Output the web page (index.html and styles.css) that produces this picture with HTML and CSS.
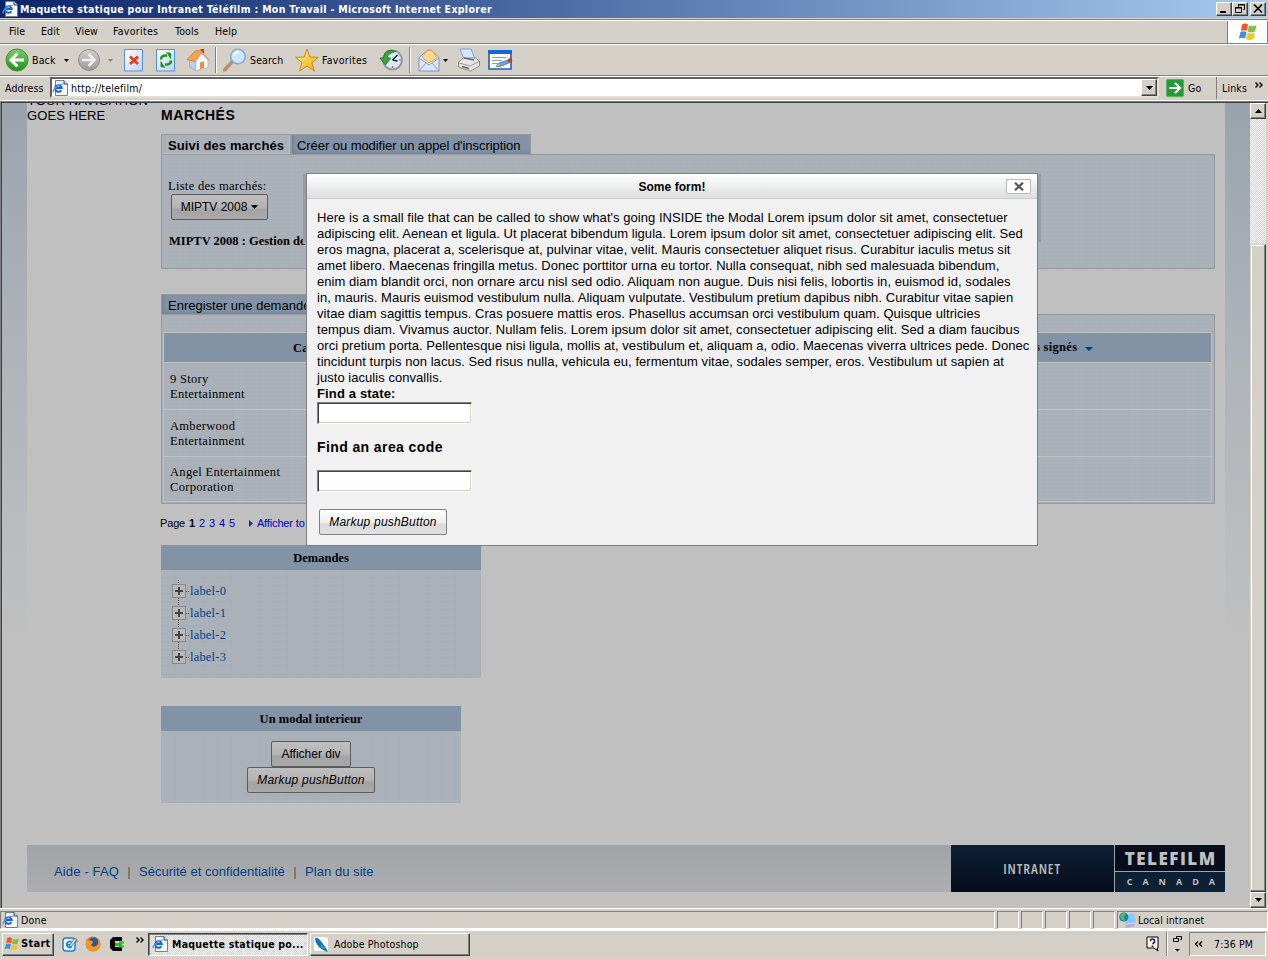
FILE: index.html
```html
<!DOCTYPE html>
<html lang="fr">
<head>
<meta charset="utf-8">
<title>Maquette statique pour Intranet Téléfilm : Mon Travail</title>
<link rel="stylesheet" href="styles.css">
</head>
<body>
<svg class="defs" width="0" height="0">
  <defs>
    <linearGradient id="gold" x1="0" y1="0" x2="1" y2="1"><stop offset="0" stop-color="#fff59a"/><stop offset="1" stop-color="#f0a800"/></linearGradient>
    <linearGradient id="green" x1="0" y1="0" x2="0" y2="1"><stop offset="0" stop-color="#7fcf6a"/><stop offset="1" stop-color="#1f8f1c"/></linearGradient>
    <linearGradient id="silver" x1="0" y1="0" x2="0" y2="1"><stop offset="0" stop-color="#d0d0d0"/><stop offset="1" stop-color="#9a9a9a"/></linearGradient>
    <linearGradient id="paper" x1="0" y1="0" x2="1" y2="1"><stop offset="0" stop-color="#fff"/><stop offset="1" stop-color="#b9d3f5"/></linearGradient>
  </defs>
  <symbol id="ie" viewBox="0 0 16 16">
    <path d="M3.500.5h8.500l3.500 3.500v11.500h-12z" fill="#f6f8fc" stroke="#6b7f9e"/>
    <path d="M12 .5V4h3.500" fill="#cfd9e8" stroke="#33415e"/>
    <path d="M9.300 10.200A3.300 3.300 0 1 1 9.700 8H3.800" fill="none" stroke="#1d62d0" stroke-width="2"/>
    <path d="M1 12.500C.5 10 6 4 11 4" fill="none" stroke="#4f97ee" stroke-width="1.200"/>
  </symbol>
  <symbol id="flag" viewBox="0 0 20 18">
    <path d="M4 1.500Q7-.5 10 1.500L8.700 8Q6 6.500 2.800 8z" fill="#f0582a"/>
    <path d="M11 2.300Q14 4.200 18.500 2.300L17 8.600Q13 10.300 9.700 8.500z" fill="#7cc242"/>
    <path d="M2.500 9Q5.500 7.500 8.500 9.200L7.200 15.500Q4 13.800.8 15.500z" fill="#3f8ee0"/>
    <path d="M9.500 9.700Q13 11.300 16.800 9.800L15.500 16Q11.500 17.800 8.200 16z" fill="#fbc41c"/>
  </symbol>
</svg>

<header class="titlebar">
  <svg width="16" height="16"><use href="#ie"/></svg>
  <h1 class="window-title">Maquette statique pour Intranet Téléfilm : Mon Travail - Microsoft Internet Explorer</h1>
  <div class="window-buttons">
    <span class="wbtn"><svg width="12" height="11"><path d="M2 8h6v2H2z"/></svg></span>
    <span class="wbtn"><svg width="12" height="11" fill="none" stroke="#000"><path d="M4.500 4V1.500h6v5H9M4 2h7M1.500 4.500h6v5h-6zM1 5h7"/></svg></span>
    <span class="wbtn last"><svg width="12" height="11"><path d="M2 1.500l8 8M10 1.500l-8 8" stroke="#000" stroke-width="1.700"/></svg></span>
  </div>
</header>

<nav class="menubar">
  <span class="m-file">File</span><span class="m-edit">Edit</span><span class="m-view">View</span><span class="m-fav">Favorites</span><span class="m-tools">Tools</span><span class="m-help">Help</span>
  <div class="throbber"><svg width="20" height="18"><use href="#flag"/></svg></div>
</nav>

<div class="toolbar">
  <svg class="t-back" width="24" height="24"><circle cx="12" cy="12" r="11" fill="url(#green)" stroke="#3f8f3a"/><path d="M12.500 5.500L6 12l6.500 6.500M6.500 12H19" fill="none" stroke="#fff" stroke-width="3"/></svg>
  <span class="t-backlabel">Back</span>
  <svg class="t-caret" width="5" height="3"><path d="M0 0h5L2.500 3z"/></svg>
  <svg class="t-fwd" width="24" height="24"><circle cx="12" cy="12" r="10.500" fill="url(#silver)" stroke="#8f8f8f"/><path d="M11.500 6L17.500 12l-6 6M17 12H5" fill="none" stroke="#eee" stroke-width="2.600"/></svg>
  <svg class="t-caret2" width="5" height="3"><path d="M0 0h5L2.500 3z" fill="#808080"/></svg>
  <svg class="t-stop" width="20" height="24"><path d="M.5 1.500h18v21.500H.5z" fill="url(#paper)" stroke="#5a8fd8"/><path d="M6 8.500l8 7.500M14 8.500L6 16" stroke="#f03a10" stroke-width="2.800"/></svg>
  <svg class="t-refresh" width="20" height="24"><path d="M.5 1.500h18v21.500H.5z" fill="url(#paper)" stroke="#5a8fd8"/><path d="M5 11.500q0-4.500 6-4" fill="none" stroke="#16961a" stroke-width="2.600"/><path d="M10 4l5 1v6.500zM9.500 20l-5-1v-6.500z" fill="#16961a"/><path d="M15 12.500q0 4.500-6 4" fill="none" stroke="#16961a" stroke-width="2.600"/></svg>
  <svg class="t-home" width="24" height="24"><path d="M14.500 1h3.500v6h-3.500z" fill="#c83a18"/><path d="M3.500 12l6 1.500v9l-6-3.500z" fill="#b7cdf2" stroke="#8ea5cc" stroke-width=".7"/><path d="M9.500 13l6-8 6.500 7v7.500l-12.500 3z" fill="#f2f6fe" stroke="#9db3da" stroke-width=".7"/><path d="M1 11.500L9.500 2.500l6.500.5-7 10.500z" fill="#f9a24c" stroke="#dd7b24" stroke-width=".8"/><path d="M9 13.500l6.500-9.500 8 8.500" fill="none" stroke="#e8a070" stroke-width="1.200"/><path d="M14 14.500l4-1v6.500l-4 1z" fill="#e4903a"/></svg>
  <i class="sep s1"></i>
  <svg class="t-search" width="24" height="24"><path d="M1.500 22L9 14" stroke="#c5896a" stroke-width="3.500" stroke-linecap="round"/><circle cx="15" cy="8.500" r="7.300" fill="#c9e8fd" stroke="#8aa9d6" stroke-width="1.600"/><path d="M10.500 8q1-4 5-4.300" fill="none" stroke="#fff" stroke-width="2"/></svg>
  <span class="t-searchlabel">Search</span>
  <svg class="t-star" width="24" height="24"><path d="M12 1l2.800 8 8.500.3-6.500 5.500 2.600 8.200L12 18l-7.300 5 2.300-8.300L.7 9.300 9.200 9z" fill="url(#gold)" stroke="#c88b10"/></svg>
  <span class="t-favlabel">Favorites</span>
  <svg class="t-history" width="24" height="24"><circle cx="13.500" cy="12" r="9.500" fill="#d7eaf6" stroke="#8b9cab" stroke-width="2"/><path d="M13.500 12l5-5M13.500 12l5 1" stroke="#223" stroke-width="1.500"/><path d="M17 3.500Q6-1 4.500 10H1l5.500 7 5-7H8Q9 4.500 17 3.500z" fill="#3ba53c" stroke="#23802a"/><path d="M13.500 18v2M20 12h2" stroke="#d44" stroke-width="1.200"/></svg>
  <i class="sep s2"></i>
  <svg class="t-mail" width="22" height="24"><path d="M1 9.500L10 2h3l8 7.500v13.500H1z" fill="#dbe8fb" stroke="#8794c8"/><path d="M4 9l6-6.500h4L19 10l-8 5z" fill="#ffd88a" stroke="#d79f4c" stroke-width=".8"/><path d="M1 10l10 7 10-7M1 23l7-8M21 23l-7-8" fill="none" stroke="#8b9bd0"/></svg>
  <svg class="t-caret3" width="5" height="3"><path d="M0 0h5L2.500 3z"/></svg>
  <svg class="t-print" width="24" height="24"><path d="M3 1h11l4 10H7z" fill="#d5e6fc" stroke="#7ca0dc"/><path d="M1.500 14l5-4h12l4 3v5l-9 5-12-4z" fill="#e6e6e6" stroke="#8c8c8c"/><path d="M2 15l11 3 9-4.500" fill="none" stroke="#999"/><path d="M7 10l10 2" stroke="#666" stroke-width="1.500"/><path d="M5 18.500l7 2" stroke="#666" stroke-width="1.500"/></svg>
  <svg class="t-edit" width="25" height="20"><path d="M1 1h22v18H1z" fill="#fff" stroke="#1b5fc0" stroke-width="1.600"/><path d="M0 0h24v4H0z" fill="#1469d8"/><path d="M4 7.500h14M4 10.500h10M4 13.500h6" stroke="#999"/><path d="M8 16.500l3-3.500 9-3 1 3-9 3.500z" fill="#69a8ee" stroke="#345c9e" stroke-width=".7"/><path d="M8 16.500l3-3.500 1 3z" fill="#f0b050"/><circle cx="22" cy="10.500" r="2.200" fill="#c9391f"/></svg>
</div>

<div class="addressbar">
  <span class="a-label">Address</span>
  <div class="a-field"><svg width="16" height="16"><use href="#ie"/></svg><span class="a-url">http://telefilm/</span><span class="a-drop"><svg width="7" height="4"><path d="M0 0h7L3.500 4z"/></svg></span></div>
  <div class="a-go"><svg width="18" height="18"><rect x=".5" y=".5" width="17" height="17" rx="1" fill="#27973a" stroke="#58b45c"/><path d="M3 9h10M9 4l5 5-5 5" fill="none" stroke="#fff" stroke-width="2.200"/></svg><span>Go</span></div>
  <div class="a-links"><span>Links</span><svg width="8" height="6" fill="none" stroke="#000" stroke-width="1.400"><path d="M.5.5L3 3 .5 5.500M4.500.5L7 3 4.500 5.500"/></svg></div>
</div>

<main class="window">
  <div class="page">
    <div class="strip"></div>
    <div class="site">
      <div class="columns">
        <aside class="sidenav">YOUR NAVIGATION<br>GOES HERE</aside>
        <section class="content">
          <h2 class="heading">MARCHÉS</h2>
          <div class="tabs">
            <span class="tab active">Suivi des marchés</span><span class="tab off">Créer ou modifier un appel d'inscription</span>
          </div>
          <div class="panel markets">
            <div class="m-label">Liste des marchés:</div>
            <span class="btn b-miptv">MIPTV 2008 <svg width="7" height="4"><path d="M0 0h7L3.500 4z"/></svg></span>
            <div class="m-title">MIPTV 2008 : Gestion de</div>
          </div>
          <div class="tabs second"><span class="tab off enr">Enregister une demande</span></div>
          <div class="panel catalog">
            <div class="table">
              <div class="thead"><span class="th1">Ca</span><span class="th2">s signés <svg width="8" height="4"><path d="M0 0h8L4 4z" fill="#003f87"/></svg></span></div>
              <div class="row">9 Story<br>Entertainment</div>
              <div class="row r2">Amberwood<br>Entertainment</div>
              <div class="row r3">Angel Entertainment<br>Corporation</div>
            </div>
          </div>
          <div class="pager"><span>Page</span><b>1</b><a>2</a><a>3</a><a>4</a><a>5</a><svg width="4" height="7"><path d="M0 0l4 3.500L0 7z" fill="#003f87"/></svg><a class="all">Afficher to</a></div>
          <div class="box demandes">
            <h3>Demandes</h3>
            <ul class="tree">
              <li><i class="plus"></i><a>label-0</a></li>
              <li><i class="plus"></i><a>label-1</a></li>
              <li><i class="plus"></i><a>label-2</a></li>
              <li><i class="plus"></i><a>label-3</a></li>
            </ul>
          </div>
          <div class="box interieur">
            <h3>Un modal interieur</h3>
            <div class="stack"><span class="btn b-div">Afficher div</span><span class="btn b-push">Markup pushButton</span></div>
          </div>
        </section>
      </div>
      <footer class="footer">
        <div class="f-links"><a class="f1">Aide - FAQ</a><i>|</i><a class="f2">Sécurité et confidentialité</a><i>|</i><a class="f3">Plan du site</a></div>
        <div class="f-intranet">INTRANET</div>
        <div class="f-logo"><b>TELEFILM</b><span>CANADA</span></div>
      </footer>
    </div>
    <div class="strip"></div>

    <div class="shadow"></div>
    <div class="modal">
      <div class="modal-head"><span class="modal-title">Some form!</span><span class="close"><svg width="10" height="9"><path d="M1 .8l8 7.400M9 .8L1 8.200" stroke="#555" stroke-width="2.200"/></svg></span></div>
      <div class="modal-body">
        <p class="lorem">Here is a small file that can be called to show what's going INSIDE the Modal Lorem ipsum dolor sit amet, consectetuer<br>adipiscing elit. Aenean et ligula. Ut placerat bibendum ligula. Lorem ipsum dolor sit amet, consectetuer adipiscing elit. Sed<br>eros magna, placerat a, scelerisque at, pulvinar vitae, velit. Mauris consectetuer aliquet risus. Curabitur iaculis metus sit<br>amet libero. Maecenas fringilla metus. Donec porttitor urna eu tortor. Nulla consequat, nibh sed malesuada bibendum,<br>enim diam blandit orci, non ornare arcu nisl sed odio. Aliquam non augue. Duis nisi felis, lobortis in, euismod id, sodales<br>in, mauris. Mauris euismod vestibulum nulla. Aliquam vulputate. Vestibulum pretium dapibus nibh. Curabitur vitae sapien<br>vitae diam sagittis tempus. Cras posuere mattis eros. Phasellus accumsan orci vestibulum quam. Quisque ultricies<br>tempus diam. Vivamus auctor. Nullam felis. Lorem ipsum dolor sit amet, consectetuer adipiscing elit. Sed a diam faucibus<br>orci pretium porta. Pellentesque nisi ligula, mollis at, vestibulum et, aliquam a, odio. Maecenas viverra ultrices pede. Donec<br>tincidunt turpis non lacus. Sed risus nulla, vehicula eu, fermentum vitae, sodales semper, eros. Vestibulum ut sapien at<br>justo iaculis convallis.</p>
        <label class="state">Find a state:</label>
        <div class="input"></div>
        <h4 class="area">Find an area code</h4>
        <div class="input"></div>
        <span class="btn light b-push">Markup pushButton</span>
      </div>
    </div>
  </div>
  <div class="scrollbar">
    <span class="sbtn"><svg width="7" height="4"><path d="M0 4h7L3.500 0z"/></svg></span>
    <span class="track"></span>
    <span class="thumb"></span>
    <span class="sbtn"><svg width="7" height="4"><path d="M0 0h7L3.500 4z"/></svg></span>
  </div>
</main>

<div class="status">
  <div class="cell done"><svg width="16" height="16"><use href="#ie"/></svg><span>Done</span></div>
  <div class="cell small"></div><div class="cell small"></div><div class="cell small"></div><div class="cell small"></div><div class="cell small"></div>
  <div class="cell zone"><svg width="17" height="16"><path d="M6 3.500l9-1.500 1.300 7.500-9 1.500z" fill="#6cd4fb" stroke="#b0bdea" stroke-width="1.500"/><circle cx="4.800" cy="5" r="4.600" fill="#1f78d0"/><path d="M2 2q3-3 5 0l-2 3 1 4-3-1-2-3z" fill="#4bc33a"/><path d="M6 13l9-1.500 1 3-9 1.500z" fill="#b0b0e0"/></svg><span>Local intranet</span></div>
</div>

<footer class="taskbar">
  <div class="start"><svg width="16" height="16"><use href="#flag"/></svg><b>Start</b></div>
  <svg class="q1" width="16" height="16"><rect x="1" y="2" width="12" height="13" rx="3" fill="#f0f7ff" stroke="#1f7fd6" stroke-width="1.500"/><path d="M9.500 6A3 3 0 1 0 10 10.500M5 8.500h5" fill="none" stroke="#1f7fd6" stroke-width="1.600"/><path d="M7 10l6-8 2 1.500-6 7.500z" fill="#cbe6ff" stroke="#1a66b8" stroke-width=".8"/><circle cx="14.500" cy="5" r="1.200" fill="#d0602a"/></svg>
  <svg class="q2" width="16" height="16"><circle cx="8" cy="8" r="7.500" fill="#e9731c"/><circle cx="8.500" cy="6.500" r="5" fill="#28599f"/><path d="M1 3q2 2 4 1.500 3 0 3 2L6 9q2 3 6 .5 2-2 1-6 3.500 3 2 8-3 4-7 4T1 11z" fill="#f29522"/></svg>
  <svg class="q3" width="16" height="16"><path d="M4 1h9v4H6v6h7v4H4L1 12V4z"/><path d="M6 7h4V5.500h5v2h-2v2h2v2h-5V10H6z" fill="#16c51c"/></svg>
  <svg class="q4" width="8" height="6" fill="none" stroke="#000" stroke-width="1.400"><path d="M.5.5L3 3 .5 5.500M4.500.5L7 3 4.500 5.500"/></svg>
  <div class="task pressed"><svg width="16" height="16"><use href="#ie"/></svg><b>Maquette statique po...</b></div>
  <div class="task"><svg width="15" height="15"><rect width="14" height="14" rx="2" fill="#fff"/><path d="M1 2q1-3 5 1l6 8 2 4-5-2Q2 9 1 2z" fill="#1474c4"/><path d="M6 7l5 5-3-1z" fill="#54c36a"/></svg><span>Adobe Photoshop</span></div>
  <div class="tray">
    <svg width="14" height="16"><path d="M1 1h11v11h-1l1 3-4-3H1z" fill="#ffffd8" stroke="#000"/><path d="M4.500 5q0-2 2-2t2 2-2 3M6.500 9.500v1.500" fill="none" stroke="#1010c0" stroke-width="1.700"/></svg>
    <i class="tsep"></i>
    <svg class="rest" width="9" height="17"><path d="M3.500 2V.5h5v3H7M.5 2.500h5v3h-5z" fill="none" stroke="#000"/><path d="M2 13h5L4.500 15.500z"/></svg>
    <div class="clock"><svg width="9" height="6" fill="none" stroke="#000" stroke-width="1.400"><path d="M4 .5L1.500 3 4 5.500M8 .5L5.500 3 8 5.500"/></svg><span>7:36 PM</span></div>
  </div>
</footer>
</body>
</html>
```
FILE: styles.css
```css
* { box-sizing: border-box; }
body { margin: 0; width: 1268px; height: 959px; overflow: hidden; display: flex; flex-direction: column; background: #d4d0c8; color: #000; font: 10.5px/14px "DejaVu Sans Condensed", "DejaVu Sans", sans-serif; font-stretch: condensed; letter-spacing: .15px; white-space: nowrap; }
h1, h2, h3, h4, p, ul { margin: 0; padding: 0; }
i { font-style: normal; }
svg { flex: none; display: block; }
.defs { position: absolute; }

/* Window chrome */
.titlebar { height: 18px; flex: none; display: flex; align-items: center; padding: 0 2px; gap: 2px; background: linear-gradient(90deg, #0a246a, #a6caf0); }
.window-title { flex: 1; color: #fff; font-size: 10.5px; line-height: 18px; font-weight: bold; letter-spacing: .32px; }
.window-buttons { display: flex; }
.wbtn { width: 16px; height: 14px; background: #d4d0c8; border: 1px solid; border-color: #fff #404040 #404040 #fff; box-shadow: inset -1px -1px #808080; display: flex; justify-content: center; }
.wbtn.last { margin-left: 2px; }
.menubar { height: 25px; flex: none; margin-top: 1px; border-top: 1px solid #808080; border-bottom: 1px solid #808080; box-shadow: inset 0 1px #fff; display: flex; align-items: center; padding-left: 9px; position: relative; }
.menubar span { line-height: 22px; margin-top: -2px; }
.m-file { width: 32px; } .m-edit { width: 34px; } .m-view { width: 38px; } .m-fav { width: 62px; letter-spacing: .3px; } .m-tools { width: 40px; }
.throbber { margin-left: auto; width: 41px; height: 22px; margin-top: 1px; background: #fff; border-left: 1px solid #808080; border-right: 1px solid #808080; display: flex; align-items: center; justify-content: center; }
.toolbar { height: 32px; flex: none; border-top: 1px solid #fff; border-bottom: 1px solid #808080; display: flex; align-items: center; padding-left: 5px; }
.t-backlabel { margin-left: 3px; width: 32px; }
.t-fwd { margin-left: 8px; } .t-caret2 { margin-left: 7px; } .t-stop { margin-left: 11px; } .t-refresh { margin-left: 12px; } .t-home { margin-left: 10px; }
.sep { width: 2px; height: 26px; border-left: 1px solid #808080; border-right: 1px solid #fff; }
.s1 { margin-left: 5px; } .t-search { margin-left: 6px; } .t-searchlabel { margin-left: 3px; width: 44px; }
.t-star { margin-left: 1px; } .t-favlabel { margin-left: 3px; width: 55px; letter-spacing: .3px; } .t-history { margin-left: 2px; }
.s2 { margin-left: 6px; } .t-mail { margin-left: 7px; } .t-caret3 { margin-left: 3px; } .t-print { margin-left: 9px; } .t-edit { margin-left: 7px; }
.addressbar { height: 25px; flex: none; border-top: 1px solid #fff; border-bottom: 1px solid #fff; display: flex; align-items: center; padding: 0 0 2px 5px; position: relative; }
.a-label { width: 45px; }
.a-field { width: 1109px; height: 21px; background: #fff; border: 2px solid; border-color: #606060 #e4e0d8 #e4e0d8 #606060; display: flex; align-items: center; gap: 3px; }
.a-drop { margin-left: auto; width: 16px; height: 17px; background: #d4d0c8; border: 1px solid; border-color: #fff #404040 #404040 #fff; box-shadow: inset -1px -1px #808080; display: flex; align-items: center; justify-content: center; }
.a-url { letter-spacing: .2px; }
.a-go { width: 58px; padding-left: 7px; display: flex; align-items: center; gap: 4px; height: 22px; border-right: 1px solid #808080; }
.a-links { display: flex; gap: 8px; padding-left: 5px; }
.a-links svg { margin-top: 1px; }

/* Browser viewport */
.window { flex: 1; display: flex; border: 1px solid #808080; border-right: 0; border-bottom: 0; box-shadow: inset 1px 1px #404040; padding: 1px 2px 0 1px; min-height: 0; }
.page { width: 1248px; height: 805px; position: relative; overflow: hidden; background: #c0c0c0; display: flex; }
.strip { width: 25px; flex: none; background: linear-gradient(#9aa3ad, #b0b5ba 270px, #c0c0c0 540px); }
.site { width: 1198px; flex: none; display: flex; flex-direction: column; }
.columns { display: flex; height: 742px; }
.sidenav { width: 134px; flex: none; font: 13px/15px "Liberation Sans", Arial, sans-serif; margin-top: -10px; letter-spacing: .1px; }
.content { width: 1054px; }
.heading { font: bold 14px/16px "Liberation Sans", Arial, sans-serif; margin-top: 4px; height: 27px; letter-spacing: .5px; }
.tabs { display: flex; height: 20px; }
.tab { font: 13px/21px "Liberation Sans", Arial, sans-serif; height: 20px; border: 1px solid #969a9e; border-bottom: 0; letter-spacing: -.06px; }
.tab.active { width: 130px; padding-left: 6px; font-weight: bold; background: #abb1b8; letter-spacing: .12px; box-shadow: inset -1px -1px #c0c0c0; }
.tab.off { width: 240px; padding-left: 5px; background: #8293a6; box-shadow: inset 2px -2px 2px #74859a; }
.tab.enr { width: 170px; padding-left: 6px; letter-spacing: 0; }
.panel { border: 1px solid #969a9e; background: repeating-linear-gradient(90deg, #a2a9b030 0 1px, transparent 1px 14px), repeating-linear-gradient(#a2a9b030 0 2px, transparent 2px 8px), #abb1b8; font-family: "Liberation Serif", "Times New Roman", serif; font-size: 12.5px; }
.markets { height: 115px; padding: 24px 0 0 7px; display: flex; flex-direction: column; align-items: flex-start; }
.m-label { line-height: 15px; letter-spacing: .3px; margin-left: -1px; }
.markets .btn { margin: 0 0 0 2px; }
.m-title { margin-top: 14px; font-weight: bold; line-height: 15px; letter-spacing: 0; }
.btn { height: 26px; border: 1px solid #5c5c5c; border-radius: 2px; background: linear-gradient(#bebebe, #b4b4b4 50%, #a4a4a4 60%, #a8a8a8); font: 12px/24px "Liberation Sans", Arial, sans-serif; display: flex; align-items: center; justify-content: center; letter-spacing: 0; padding-bottom: 1px; }
.b-miptv { width: 97px; gap: 4px; }
.b-div { width: 80px; }
.b-push { width: 128px; font-style: italic; letter-spacing: .2px; }
.second { margin-top: 25px; }
.catalog { height: 190px; padding: 17px 2px 0 1px; }
.table { border: 1px solid #c0c0c0; }
.thead { height: 30px; background: #8293a6; border-bottom: 1px solid #c0c0c0; display: flex; font-weight: bold; line-height: 31px; }
.th1 { width: 742px; padding-left: 129px; }
.th2 { flex: 1; text-align: left; padding-left: 129px; display: flex; align-items: center; gap: 8px; letter-spacing: .3px; }
.th2 svg { margin-top: 3px; }
.row { height: 47px; border-bottom: 1px solid #c0c0c0; padding: 9px 0 0 6px; line-height: 15px; letter-spacing: .3px; }
.r3 { height: 44px; border-bottom: 0; padding-top: 8px; }
.pager { height: 41px; margin-left: -1px; padding-bottom: 2px; font: 11px/39px "Liberation Sans", Arial, sans-serif; display: flex; align-items: center; gap: 4px; letter-spacing: -.15px; }
.pager a { color: #0000c0; }
.pager svg { margin: 0 0 0 10px; }
.box { background: repeating-linear-gradient(90deg, #a2a9b030 0 1px, transparent 1px 14px), repeating-linear-gradient(#a2a9b030 0 2px, transparent 2px 8px), #abb1b8; font-family: "Liberation Serif", "Times New Roman", serif; font-size: 12.5px; }
.box h3 { height: 25px; font-size: 12.5px; line-height: 26px; text-align: center; background: #8293a6; letter-spacing: 0; }
.demandes { width: 320px; height: 133px; }
.tree { list-style: none; padding: 10px 0 0 11px; }
.tree li { height: 22px; display: flex; align-items: center; background: repeating-linear-gradient(#555 0 1px, transparent 1px 2px) 6px 0 / 1px 22px no-repeat, repeating-linear-gradient(90deg, #555 0 1px, transparent 1px 2px) 14px 11px / 4px 1px no-repeat; }
.tree li:last-child { background-size: 1px 12px, 4px 1px; }
.plus { width: 14px; height: 14px; border: 1px solid #85888c; background: linear-gradient(#444, #444) center / 8px 2px no-repeat, linear-gradient(#444, #444) center / 2px 8px no-repeat, #b8b8b8; }
.tree a { margin-left: 4px; color: #003f87; letter-spacing: .2px; }
.interieur { width: 300px; height: 97px; margin-top: 28px; }
.stack { display: flex; flex-direction: column; align-items: center; padding-top: 10px; }

.footer { width: 1198px; height: 47px; display: flex; }
.f-links { width: 924px; padding: 6px 0 0 27px; background: linear-gradient(#a0a4a7, #acaeb1); display: flex; align-items: center; font: 13px/16px "Liberation Sans", Arial, sans-serif; letter-spacing: .05px; color: #003f87; }
.f-links i { width: 20px; text-align: center; color: #555; }
.f-links .f1 { width: 65px; letter-spacing: .15px; }
.f-links .f2 { width: 146px; letter-spacing: .02px; }
.f-intranet { width: 163px; background: linear-gradient(#0d2134, #050d1d); color: #b8b8b8; display: flex; align-items: center; justify-content: center; font: 600 14px "Open Sans", sans-serif; font-stretch: 84%; letter-spacing: .9px; }
.f-logo { flex: 1; border-left: 1px solid #a0a4a8; background: #060d1c; color: #c0c0c0; }
.f-logo b { display: block; height: 27px; border-bottom: 1px solid #a0a4a8; font: 800 17px/27px "Open Sans", sans-serif; letter-spacing: 1.5px; padding-left: 10px; }
.f-logo span { display: block; height: 20px; background: #0d2134; font: bold 9px/20px "Open Sans", sans-serif; letter-spacing: 10px; padding-left: 12px; overflow: hidden; }

/* Dialog floating above the page */
.shadow { position: absolute; left: 301px; top: 71px; width: 738px; height: 68px; background: #969ca3; }
.modal { position: absolute; left: 304px; top: 70px; width: 732px; height: 373px; border: 1px solid #808080; background: #f1f1f1; font: 13px/16px "Liberation Sans", Arial, sans-serif; }
.modal-head { height: 25px; border-bottom: 1px solid #ccced0; background: linear-gradient(#fff, #dcddde); display: flex; align-items: center; justify-content: center; position: relative; }
.modal-title { font-size: 12px; font-weight: bold; letter-spacing: .05px; padding-top: 1px; }
.close { position: absolute; right: 6px; top: 5px; width: 25px; height: 15px; border: 1px solid #bbb; border-radius: 1px; background: #fff; display: flex; align-items: center; justify-content: center; }
.modal-body { padding: 11px 10px; }
.lorem { font-size: 13px; letter-spacing: .045px; }
.state { display: block; font-weight: bold; letter-spacing: .15px; }
.input { width: 155px; height: 22px; background: #fff; border: 1px solid; border-color: #808080 #fff #fff #808080; box-shadow: inset 1px 1px #404040, inset -1px -1px #d4d0c8; }
.area { font-size: 14px; line-height: 16px; margin: 15px 0; letter-spacing: .4px; }
.light { margin: 17px 0 0 2px; border-color: #808080; background: linear-gradient(#fff, #f0f0f0 50%, #d8dada 60%, #dfdfdf); }

/* Scrollbar */
.scrollbar { width: 16px; display: flex; flex-direction: column; height: 805px; }
.sbtn { width: 16px; height: 16px; flex: none; background: #d4d0c8; border: 1px solid; border-color: #fff #404040 #404040 #fff; box-shadow: inset -1px -1px #808080; display: flex; align-items: center; justify-content: center; }
.track { height: 125px; flex: none; background: repeating-conic-gradient(#fff 0 25%, #d4d0c8 0 50%) 0 0 / 2px 2px; }
.thumb { flex: 1; border: 1px solid; border-color: #d4d0c8 #404040 #404040 #d4d0c8; box-shadow: inset -1px -1px #808080, inset 1px 1px #fff; }

.status { height: 22px; flex: none; border-top: 1px solid #fff; border-bottom: 1px solid #fff; display: flex; gap: 2px; padding-top: 2px; }
.cell { height: 18px; border: 1px solid; border-color: #808080 #fff #fff #808080; display: flex; align-items: center; gap: 3px; padding-left: 1px; }
.done { width: 995px; letter-spacing: .2px; } .small { width: 22px; } .zone { flex: 1; gap: 2px; letter-spacing: .1px; }

.taskbar { height: 29px; flex: none; border-top: 1px solid #fff; display: flex; align-items: center; padding: 0 2px 2px; }
.start { width: 52px; height: 23px; border: 1px solid; border-color: #fff #404040 #404040 #fff; box-shadow: inset -1px -1px #808080; display: flex; align-items: center; gap: 1px; padding-left: 1px; font-size: 11px; letter-spacing: .3px; }
.q1 { margin-left: 8px; } .q2 { margin-left: 7px; } .q3 { margin-left: 8px; } .q4 { margin: -8px 4px 0 11px; }
.task { width: 160px; height: 23px; border: 1px solid; border-color: #fff #404040 #404040 #fff; box-shadow: inset -1px -1px #808080; display: flex; align-items: center; gap: 5px; padding-left: 3px; margin-left: 2px; }
.pressed { gap: 4px; margin-left: 0; letter-spacing: .25px; border-color: #404040 #fff #fff #404040; box-shadow: inset 1px 1px #808080; background: repeating-conic-gradient(#fff 0 25%, #d4d0c8 0 50%) 0 0 / 2px 2px; }
.tray { margin-left: auto; display: flex; align-items: center; }
.tsep { width: 2px; height: 24px; margin-left: 6px; border-left: 1px solid #808080; border-right: 1px solid #fff; }
.rest { margin: 0 7px 0 5px; }
.clock { width: 77px; height: 24px; border: 1px solid; border-color: #808080 #fff #fff #808080; display: flex; align-items: center; padding-left: 4px; gap: 11px; }
```
